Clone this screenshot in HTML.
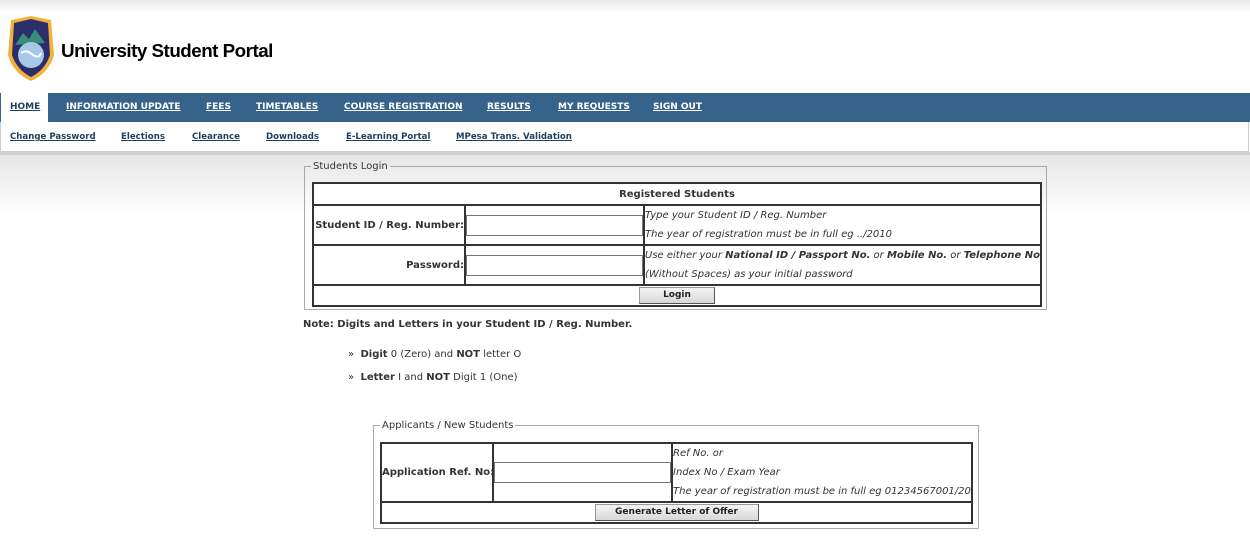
<!DOCTYPE html>
<html><head><style>
body{margin:0;width:1250px;height:544px;position:relative;background:#fff;font-family:"DejaVu Sans",Verdana,sans-serif;font-size:10px;color:#333;overflow:hidden}
.a{position:absolute}
.nav a{position:absolute;top:102px;color:#fff;font-weight:bold;font-size:9px;text-decoration:underline;white-space:nowrap}
.sub a{position:absolute;top:132px;color:#1f3f5f;font-weight:bold;font-size:8.6px;text-decoration:underline;white-space:nowrap}
table{border-collapse:collapse;position:absolute;background:#fff;table-layout:fixed}
td{border:2px solid #333;padding:0;white-space:nowrap;overflow:hidden}
.inp{width:177px;height:21px;border:1px solid #777;box-sizing:border-box;display:block}
.btn{display:inline-block;background:linear-gradient(#f4f4f4,#d8d8d8);border:1px solid #999;border-right-color:#555;border-bottom-color:#555;font-weight:bold;font-size:9px;color:#222;text-align:center;line-height:15px}
i{font-style:italic;display:block;line-height:19px}
fieldset{position:absolute;margin:0;border:1px solid #aaa;padding:0}
legend{font-size:10px;color:#333;padding:0 2px;margin-left:6px}
</style></head><body>
<div class="a" style="left:0;top:0;width:1250px;height:12px;background:linear-gradient(#e8e8e8,#fff)"></div>
<div class="a" style="left:0;top:155px;width:1250px;height:60px;background:linear-gradient(#e6e6e6,#fff)"></div>
<svg class="a" style="left:5px;top:15px" width="52" height="67" viewBox="0 0 52 67">
<path d="M6 5 L26 1 L46 5 L49 40 Q44 58 26 66 Q8 58 3 40 Z" fill="#f2b23a"/>
<path d="M9 8 L26 4 L43 8 L45 40 Q40 55 26 62 Q12 55 7 40 Z" fill="#2a2e6b"/>
<path d="M10 30 L18 18 L24 24 L30 14 L40 28 Z" fill="#3b8a7a"/>
<circle cx="26" cy="40" r="13" fill="#a8c8e8"/>
<path d="M16 38 Q22 34 28 40 Q34 44 36 38" stroke="#fff" stroke-width="2" fill="none"/>
</svg>
<div class="a" style="left:61px;top:40px;font-family:'Liberation Sans',Arial,sans-serif;font-weight:bold;font-size:18.8px;color:#000;letter-spacing:-0.5px">University Student Portal</div>
<div class="a" style="left:0;top:93px;width:1250px;height:29px;background:#37638a"></div>
<div class="a" style="left:1px;top:93px;width:47px;height:30px;background:#fff"></div>
<div class="a" style="left:0;top:122px;width:1249px;height:30px;border:1px solid #ccc;border-top:0;background:#fff;box-sizing:border-box"></div>
<div class="a" style="left:0;top:152px;width:1250px;height:3px;background:#d0d0d0"></div>
<div class="nav">
<a style="left:10px;color:#1f3f5f">HOME</a><a style="left:66px">INFORMATION UPDATE</a><a style="left:206px">FEES</a><a style="left:256px">TIMETABLES</a><a style="left:344px">COURSE REGISTRATION</a><a style="left:487px">RESULTS</a><a style="left:558px">MY REQUESTS</a><a style="left:653px">SIGN OUT</a>
</div>
<div class="sub">
<a style="left:10px">Change Password</a><a style="left:121px">Elections</a><a style="left:192px">Clearance</a><a style="left:266px">Downloads</a><a style="left:346px">E-Learning Portal</a><a style="left:456px">MPesa Trans. Validation</a>
</div>
<fieldset style="left:304px;top:161px;width:741px;height:147px"><legend>Students Login</legend></fieldset>
<table style="left:312px;top:182px;width:730px">
<colgroup><col style="width:152px"><col style="width:179px"><col></colgroup>
<tr style="height:22px"><td colspan="3" style="text-align:center;font-weight:bold">Registered Students</td></tr>
<tr style="height:39px"><td style="text-align:right;font-weight:bold">Student ID / Reg. Number:</td><td><input class="inp"></td><td><i>Type your Student ID / Reg. Number</i><i>The year of registration must be in full eg ../2010</i></td></tr>
<tr style="height:39px"><td style="text-align:right;font-weight:bold">Password:</td><td><input class="inp" type="password"></td><td><i>Use either your <b>National ID / Passport No.</b> or <b>Mobile No.</b> or <b>Telephone No.</b></i><i>(Without Spaces) as your initial password</i></td></tr>
<tr style="height:21px"><td colspan="3" style="text-align:center"><span class="btn" style="width:74px">Login</span></td></tr>
</table>
<div class="a" style="left:303px;top:319px;font-weight:bold">Note: Digits and Letters in your Student ID / Reg. Number.</div>
<div class="a" style="left:348px;top:349px">» &nbsp;<b>Digit</b> 0 (Zero) and <b>NOT</b> letter O</div>
<div class="a" style="left:348px;top:372px">» &nbsp;<b>Letter</b> I and <b>NOT</b> Digit 1 (One)</div>
<fieldset style="left:373px;top:420px;width:604px;height:107px"><legend>Applicants / New Students</legend></fieldset>
<table style="left:380px;top:442px;width:593px">
<colgroup><col style="width:112px"><col style="width:179px"><col></colgroup>
<tr style="height:58px"><td style="text-align:right;font-weight:bold">Application Ref. No:</td><td><input class="inp"></td><td><i>Ref No. or</i><i>Index No / Exam Year</i><i>The year of registration must be in full eg 01234567001/2015</i></td></tr>
<tr style="height:21px"><td colspan="3" style="text-align:center"><span class="btn" style="width:162px">Generate Letter of Offer</span></td></tr>
</table>
</body></html>
